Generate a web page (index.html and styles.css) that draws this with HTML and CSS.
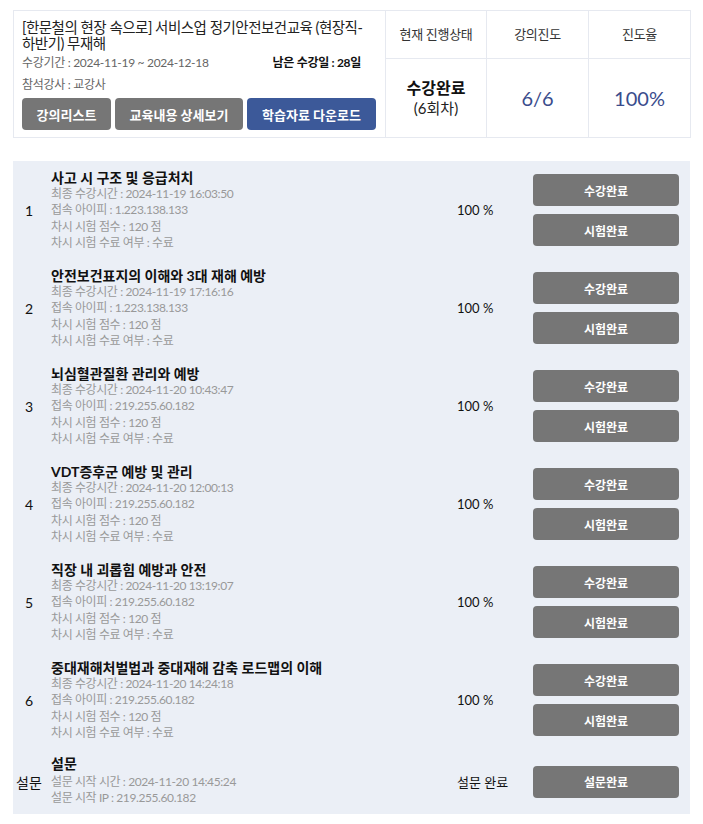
FILE: index.html
```html
<!DOCTYPE html>
<html lang="ko">
<head>
<meta charset="utf-8">
<link rel="stylesheet" href="styles.css">
</head>
<body>
<div class="page">
  <div class="summary">
    <div class="info">
      <div class="title">[한문철의 현장 속으로] 서비스업 정기안전보건교육 (현장직-하반기) 무재해</div>
      <div class="meta-row">
        <span class="period">수강기간 : 2024-11-19 ~ 2024-12-18</span>
        <span class="remain">남은 수강일 : 28일</span>
      </div>
      <div class="teacher">참석강사 : 교강사</div>
      <div class="btns">
        <button class="btn btn-gray b1">강의리스트</button>
        <button class="btn btn-gray b2">교육내용 상세보기</button>
        <button class="btn btn-blue b3">학습자료 다운로드</button>
      </div>
    </div>
    <div class="head">현재 진행상태</div>
    <div class="head">강의진도</div>
    <div class="head last">진도율</div>
    <div class="val status"><strong>수강완료</strong><span>(6회차)</span></div>
    <div class="val num">6/6</div>
    <div class="val num last">100%</div>
  </div>

  <div class="list">
    <div class="row">
      <div class="no">1</div>
      <div class="desc">
        <div class="ttl">사고 시 구조 및 응급처치</div>
        <div class="ln">최종 수강시간 : 2024-11-19 16:03:50</div>
        <div class="ln">접속 아이피 : 1.223.138.133</div>
        <div class="ln">차시 시험 점수 : 120 점</div>
        <div class="ln">차시 시험 수료 여부 : 수료</div>
      </div>
      <div class="pct">100 %</div>
      <div class="acts"><button class="rbtn">수강완료</button><button class="rbtn">시험완료</button></div>
    </div>
    <div class="row">
      <div class="no">2</div>
      <div class="desc">
        <div class="ttl">안전보건표지의 이해와 3대 재해 예방</div>
        <div class="ln">최종 수강시간 : 2024-11-19 17:16:16</div>
        <div class="ln">접속 아이피 : 1.223.138.133</div>
        <div class="ln">차시 시험 점수 : 120 점</div>
        <div class="ln">차시 시험 수료 여부 : 수료</div>
      </div>
      <div class="pct">100 %</div>
      <div class="acts"><button class="rbtn">수강완료</button><button class="rbtn">시험완료</button></div>
    </div>
    <div class="row">
      <div class="no">3</div>
      <div class="desc">
        <div class="ttl">뇌심혈관질환 관리와 예방</div>
        <div class="ln">최종 수강시간 : 2024-11-20 10:43:47</div>
        <div class="ln">접속 아이피 : 219.255.60.182</div>
        <div class="ln">차시 시험 점수 : 120 점</div>
        <div class="ln">차시 시험 수료 여부 : 수료</div>
      </div>
      <div class="pct">100 %</div>
      <div class="acts"><button class="rbtn">수강완료</button><button class="rbtn">시험완료</button></div>
    </div>
    <div class="row">
      <div class="no">4</div>
      <div class="desc">
        <div class="ttl">VDT증후군 예방 및 관리</div>
        <div class="ln">최종 수강시간 : 2024-11-20 12:00:13</div>
        <div class="ln">접속 아이피 : 219.255.60.182</div>
        <div class="ln">차시 시험 점수 : 120 점</div>
        <div class="ln">차시 시험 수료 여부 : 수료</div>
      </div>
      <div class="pct">100 %</div>
      <div class="acts"><button class="rbtn">수강완료</button><button class="rbtn">시험완료</button></div>
    </div>
    <div class="row">
      <div class="no">5</div>
      <div class="desc">
        <div class="ttl">직장 내 괴롭힘 예방과 안전</div>
        <div class="ln">최종 수강시간 : 2024-11-20 13:19:07</div>
        <div class="ln">접속 아이피 : 219.255.60.182</div>
        <div class="ln">차시 시험 점수 : 120 점</div>
        <div class="ln">차시 시험 수료 여부 : 수료</div>
      </div>
      <div class="pct">100 %</div>
      <div class="acts"><button class="rbtn">수강완료</button><button class="rbtn">시험완료</button></div>
    </div>
    <div class="row">
      <div class="no">6</div>
      <div class="desc">
        <div class="ttl">중대재해처벌법과 중대재해 감축 로드맵의 이해</div>
        <div class="ln">최종 수강시간 : 2024-11-20 14:24:18</div>
        <div class="ln">접속 아이피 : 219.255.60.182</div>
        <div class="ln">차시 시험 점수 : 120 점</div>
        <div class="ln">차시 시험 수료 여부 : 수료</div>
      </div>
      <div class="pct">100 %</div>
      <div class="acts"><button class="rbtn">수강완료</button><button class="rbtn">시험완료</button></div>
    </div>
    <div class="row survey">
      <div class="no">설문</div>
      <div class="desc">
        <div class="ttl">설문</div>
        <div class="ln">설문 시작 시간 : 2024-11-20 14:45:24</div>
        <div class="ln">설문 시작 IP : 219.255.60.182</div>
      </div>
      <div class="pct">설문 완료</div>
      <div class="acts"><button class="rbtn">설문완료</button></div>
    </div>
  </div>
</div>
</body>
</html>
```

FILE: styles.css
```css
* { box-sizing: border-box; }
body {
  margin: 0;
  background: #fff;
  font-family: Lato, "Noto Sans CJK KR", sans-serif;
  color: #222;
}
.page {
  padding: 10px 0 0 13px;
  width: 691px;
}
.summary {
  display: grid;
  grid-template-columns: 372px 101px 102px 1fr;
  grid-template-rows: 48px 78px;
  border: 1px solid #e6e9f0;
  width: 678px;
}
.info {
  grid-row: 1 / 3;
  border-right: 1px solid #e6e9f0;
  padding: 9px 12px 0 8px;
}
.title {
  font-size: 14.5px;
  line-height: 16px;
  letter-spacing: -0.5px;
  color: #222;
}
.meta-row {
  display: flex;
  justify-content: space-between;
  margin-top: 3px;
  font-size: 12px;
  line-height: 16px;
  letter-spacing: -0.3px;
  padding-right: 12px;
}
.period { color: #666; }
.remain { font-weight: 700; color: #111; }
.teacher {
  margin-top: 6px;
  font-size: 12px;
  line-height: 16px;
  letter-spacing: -0.3px;
  color: #666;
}
.btns {
  display: flex;
  gap: 4px;
  margin-top: 5px;
}
.btn {
  height: 32px;
  border: 0;
  border-radius: 4px;
  color: #fff;
  font-family: inherit;
  font-size: 13px;
  font-weight: 700;
  padding: 0;
  flex: none;
}
.btn-gray { background: #767676; }
.btn-blue { background: #3c5999; }
.b1 { width: 89px; }
.b2 { width: 128px; }
.b3 { width: 129px; }
.head {
  display: flex;
  align-items: center;
  justify-content: center;
  border-right: 1px solid #e6e9f0;
  border-bottom: 1px solid #e6e9f0;
  font-size: 13px;
  letter-spacing: -0.3px;
  color: #333;
  padding-bottom: 2px;
}
.val {
  display: flex;
  align-items: center;
  justify-content: center;
  border-right: 1px solid #e6e9f0;
}
.last { border-right: 0; }
.status {
  flex-direction: column;
  font-size: 15px;
  line-height: 21px;
  color: #222;
}
.status strong { font-size: 16px; font-weight: 700; color: #111; }
.num {
  font-size: 20px;
  color: #3a4c8c;
}
.list {
  margin-top: 23px;
  width: 677px;
  background: #ebeff6;
}
.row {
  display: grid;
  grid-template-columns: 32px 1fr 76px 146px;
  column-gap: 6px;
  align-items: center;
  padding: 0 11px 0 0;
  height: 98px;
}
.row > .pct { margin-left: 6px; }
.no {
  text-align: center;
  font-size: 14px;
  color: #111;
}
.ttl {
  font-size: 14px;
  font-weight: 700;
  line-height: 17px;
  color: #111;
}
.ln {
  font-size: 12px;
  line-height: 16.3px;
  letter-spacing: -0.4px;
  color: #999;
}
.pct {
  font-size: 13px;
  color: #111;
}
.acts {
  display: flex;
  flex-direction: column;
  gap: 8px;
}
.rbtn {
  height: 32px;
  border: 0;
  border-radius: 4px;
  background: #767676;
  color: #fff;
  font-family: inherit;
  font-size: 12px;
  font-weight: 700;
}
.survey {
  height: 65px;
}
.survey .desc {
  align-self: start;
  padding-top: 6px;
}
.survey .ttl { margin-bottom: 2px; }
```
